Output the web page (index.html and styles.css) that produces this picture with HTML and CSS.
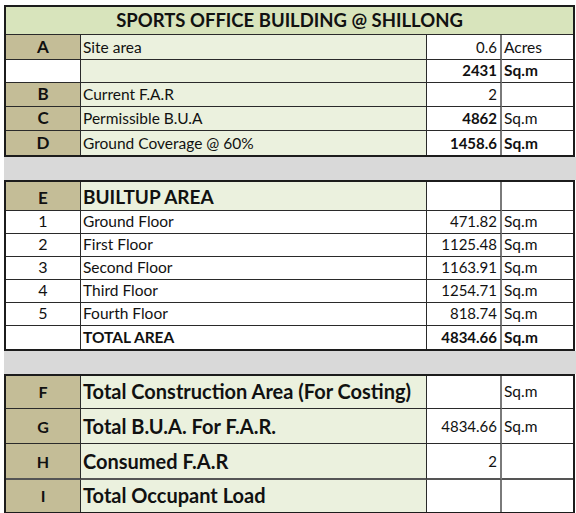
FILE: index.html
```html
<!DOCTYPE html>
<html>
<head>
<meta charset="utf-8">
<link rel="stylesheet" href="styles.css">
</head>
<body>
<div class="sheet">
  <div class="tbl t1">
    <div class="cell title span4">SPORTS OFFICE BUILDING @ SHILLONG</div>

    <div class="cell key">A</div><div class="cell desc">Site area</div><div class="cell val">0.6</div><div class="cell unit">Acres</div>
    <div class="cell blank"></div><div class="cell desc"></div><div class="cell val b">2431</div><div class="cell unit b">Sq.m</div>
    <div class="cell key">B</div><div class="cell desc">Current F.A.R</div><div class="cell val">2</div><div class="cell unit"></div>
    <div class="cell key">C</div><div class="cell desc">Permissible B.U.A</div><div class="cell val b">4862</div><div class="cell unit">Sq.m</div>
    <div class="cell key last">D</div><div class="cell desc last">Ground Coverage @ 60%</div><div class="cell val b last">1458.6</div><div class="cell unit b last">Sq.m</div>
  </div>
  <div class="band"></div>
  <div class="tbl t2">
    <div class="cell key">E</div><div class="cell desc head">BUILTUP AREA</div><div class="cell val"></div><div class="cell unit"></div>
    <div class="cell num">1</div><div class="cell plain">Ground Floor</div><div class="cell val">471.82</div><div class="cell unit">Sq.m</div>
    <div class="cell num">2</div><div class="cell plain">First Floor</div><div class="cell val">1125.48</div><div class="cell unit">Sq.m</div>
    <div class="cell num">3</div><div class="cell plain">Second Floor</div><div class="cell val">1163.91</div><div class="cell unit">Sq.m</div>
    <div class="cell num">4</div><div class="cell plain">Third Floor</div><div class="cell val">1254.71</div><div class="cell unit">Sq.m</div>
    <div class="cell num">5</div><div class="cell plain">Fourth Floor</div><div class="cell val">818.74</div><div class="cell unit">Sq.m</div>
    <div class="cell num last"></div><div class="cell plain b last">TOTAL AREA</div><div class="cell val b last">4834.66</div><div class="cell unit b last">Sq.m</div>
  </div>
  <div class="band"></div>
  <div class="tbl t3">
    <div class="cell key">F</div><div class="cell desc big">Total Construction Area (For Costing)</div><div class="cell val"></div><div class="cell unit">Sq.m</div>
    <div class="cell key">G</div><div class="cell desc big">Total B.U.A. For F.A.R.</div><div class="cell val">4834.66</div><div class="cell unit">Sq.m</div>
    <div class="cell key thick">H</div><div class="cell desc big thick">Consumed F.A.R</div><div class="cell val thick">2</div><div class="cell unit thick"></div>
    <div class="cell key last">I</div><div class="cell desc big last">Total Occupant Load</div><div class="cell val last"></div><div class="cell unit last"></div>
  </div>
</div>
</body>
</html>
```

FILE: styles.css
```css
html, body {
  margin: 0;
  padding: 0;
  background: #ffffff;
}

.sheet {
  padding: 5px 0 0 4px;
  font-family: Lato, "Liberation Sans", sans-serif;
  color: #111;
}

.tbl {
  width: 571px;
  box-sizing: border-box;
  border: 2px solid #1c1c1c;
  display: grid;
  grid-template-columns: 75px 346px 75px 71px;
}

.t1 { grid-template-rows: 28px 25px 23px 24px 24px 24px; }
.t2 { grid-template-rows: 29px 23px 23px 23px 23px 23px 23px; }
.t3 { grid-template-rows: 33px 35px 36px 32px; }

.band {
  width: 572px;
  height: 23px;
  background: #d9d9d9;
}

.cell {
  box-sizing: border-box;
  display: flex;
  align-items: flex-end;
  border-bottom: 1px solid #2a2a2a;
  border-right: 1px solid #2a2a2a;
  padding: 0 2px 3px 2px;
  font-size: 15.5px;
  line-height: 18px;
  white-space: nowrap;
  overflow: hidden;
}

.cell.last { border-bottom: none; }
.cell.thick { border-bottom: 2px solid #555; }

.span4 { grid-column: 1 / span 4; }

.b { font-weight: 700; }

.title {
  background: #d8e4bc;
  justify-content: center;
  font-weight: 700;
  font-size: 18.5px;
  line-height: 22px;
  padding-bottom: 3px;
  border-right: none;
}

.key {
  background: #c4bd97;
  justify-content: center;
  font-weight: 700;
  font-size: 17px;
}

.blank { background: #fff; }

.desc { background: #ebf1de; }

.plain { background: #fff; }

.num {
  background: #fff;
  justify-content: center;
  font-size: 16px;
}

.val {
  background: #fff;
  justify-content: flex-end;
  border-right: 2px solid #7a7a7a;
  padding-right: 3px;
  font-size: 15px;
}

.unit {
  background: #fff;
  border-right: none;
  font-size: 15.5px;
  padding-left: 2px;
}

.head {
  font-weight: 700;
  font-size: 19px;
  line-height: 22px;
  padding-bottom: 2px;
}

.big {
  font-weight: 700;
  font-size: 20px;
  line-height: 24px;
  padding-bottom: 3px;
}

.t3 .val, .t3 .unit { padding-bottom: 8px; }
.t3 .key { padding-bottom: 7px; font-size: 16px; }
.t3 .big { padding-bottom: 5px; }
```
